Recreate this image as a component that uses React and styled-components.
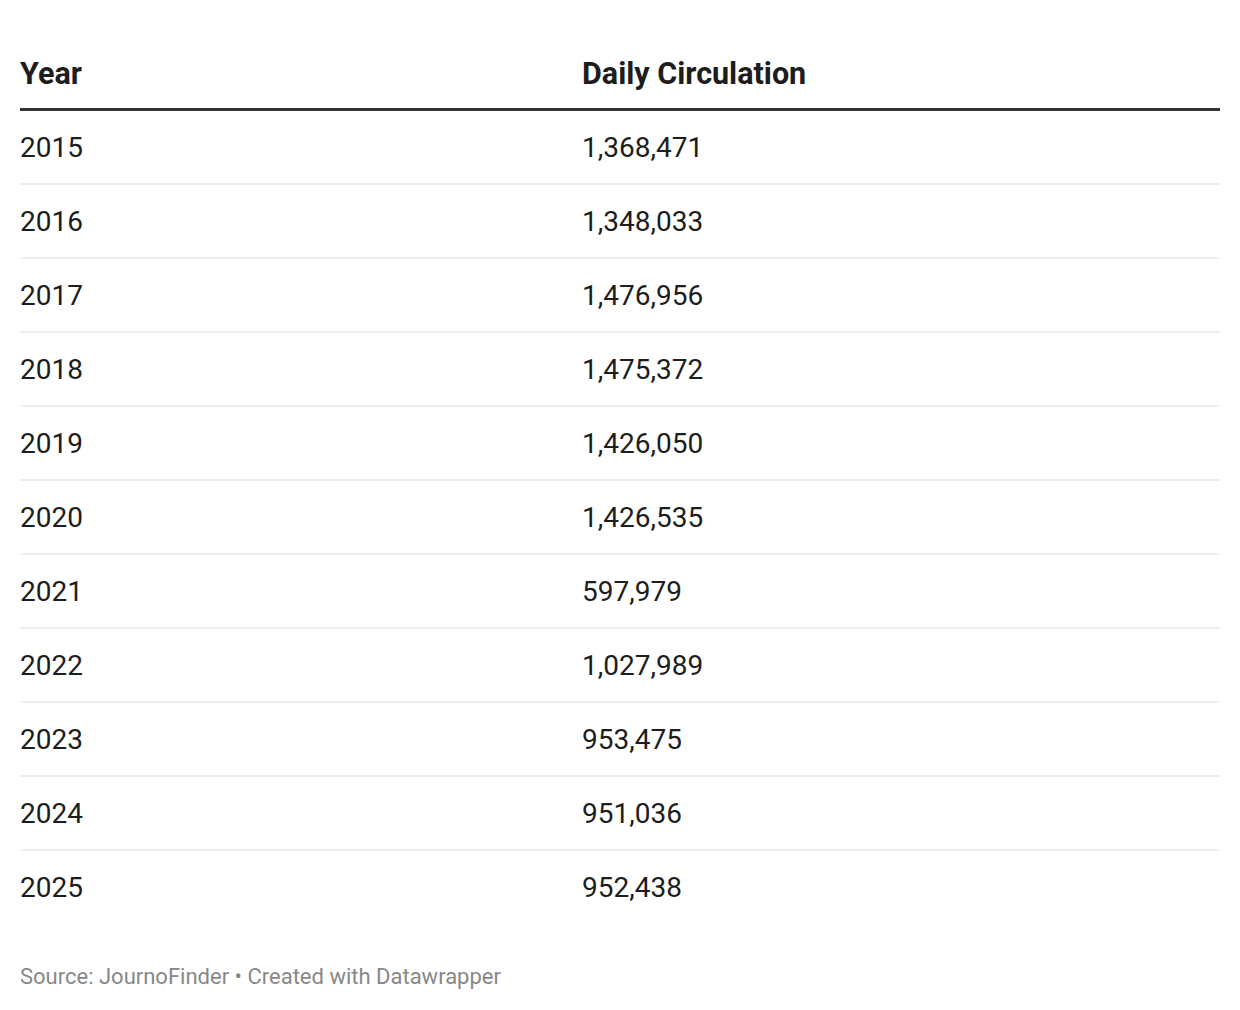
import React from 'react'
import styled, { createGlobalStyle } from 'styled-components'

const GlobalStyle = createGlobalStyle`
    html, body {
        margin: 0;
        padding: 0;
        background: #fff;
    }
    body {
        font-family: Roboto, 'Liberation Sans', sans-serif;
        color: #1d1d1d;
    }
`

const Wrapper = styled.div`
    padding: 0 20px;
`

const Table = styled.div`
    display: flex;
    flex-direction: column;
`

const Row = styled.div`
    display: grid;
    grid-template-columns: 562px 1fr;
    border-bottom: ${props => props.last ? 'none' : '2px solid #eeeeee'};
`

const HeadRow = styled.div`
    display: grid;
    grid-template-columns: 562px 1fr;
    border-bottom: 3px solid #333333;
    padding-top: 55px;
    padding-bottom: 15px;
`

const HeadCell = styled.div`
    font-size: 30.5px;
    font-weight: 700;
    line-height: 38px;
    color: #1d1d1d;
`

const Cell = styled.div`
    font-size: 28px;
    line-height: 70px;
    height: 72px;
    color: #1d1d1d;
    padding-top: 2px;
    box-sizing: border-box;
`

const Footer = styled.div`
    margin-top: 41px;
    font-size: 22px;
    line-height: 26px;
    color: #888888;
`

const rows = [
    ['2015', '1,368,471'],
    ['2016', '1,348,033'],
    ['2017', '1,476,956'],
    ['2018', '1,475,372'],
    ['2019', '1,426,050'],
    ['2020', '1,426,535'],
    ['2021', '597,979'],
    ['2022', '1,027,989'],
    ['2023', '953,475'],
    ['2024', '951,036'],
    ['2025', '952,438'],
]

const App = () => (
    <Wrapper>
        <GlobalStyle />
        <Table>
            <HeadRow>
                <HeadCell>Year</HeadCell>
                <HeadCell>Daily Circulation</HeadCell>
            </HeadRow>
            {rows.map(([year, value], i) => (
                <Row key={year} last={i === rows.length - 1}>
                    <Cell>{year}</Cell>
                    <Cell>{value}</Cell>
                </Row>
            ))}
        </Table>
        <Footer>Source: JournoFinder • Created with Datawrapper</Footer>
    </Wrapper>
)

export default App
